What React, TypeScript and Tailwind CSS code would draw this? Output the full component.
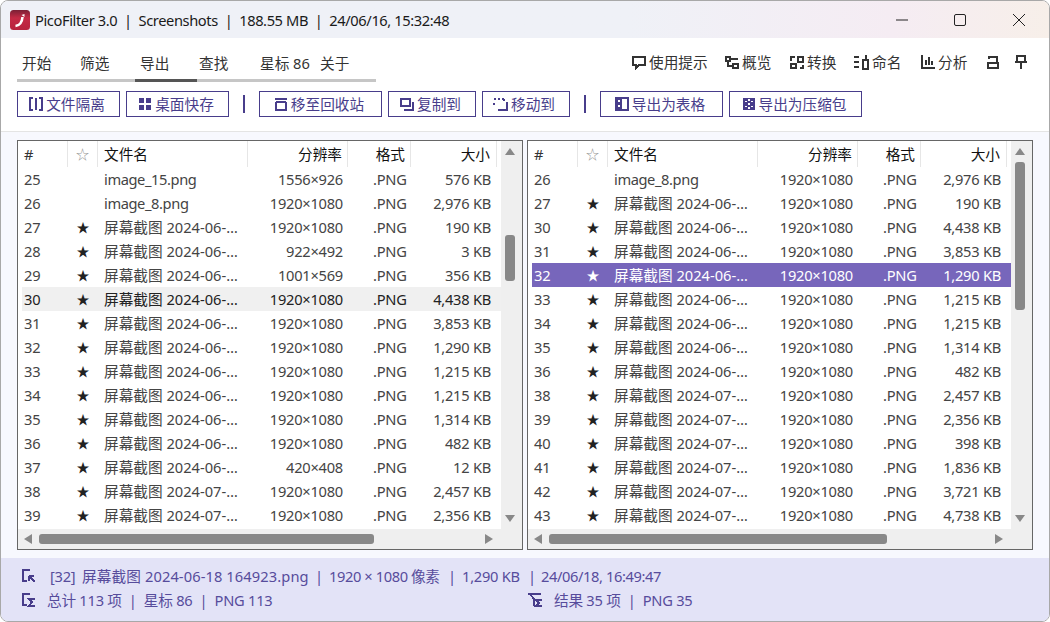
import type { ReactNode } from 'react'

type Row = [string, boolean, string, string, string]

const sh = (d: string) => '屏幕截图 2024-' + d + '-…'

const leftRows: Row[] = [
  ['25', false, 'image_15.png', '1556×926', '576 KB'],
  ['26', false, 'image_8.png', '1920×1080', '2,976 KB'],
  ['27', true, sh('06'), '1920×1080', '190 KB'],
  ['28', true, sh('06'), '922×492', '3 KB'],
  ['29', true, sh('06'), '1001×569', '356 KB'],
  ['30', true, sh('06'), '1920×1080', '4,438 KB'],
  ['31', true, sh('06'), '1920×1080', '3,853 KB'],
  ['32', true, sh('06'), '1920×1080', '1,290 KB'],
  ['33', true, sh('06'), '1920×1080', '1,215 KB'],
  ['34', true, sh('06'), '1920×1080', '1,215 KB'],
  ['35', true, sh('06'), '1920×1080', '1,314 KB'],
  ['36', true, sh('06'), '1920×1080', '482 KB'],
  ['37', true, sh('06'), '420×408', '12 KB'],
  ['38', true, sh('07'), '1920×1080', '2,457 KB'],
  ['39', true, sh('07'), '1920×1080', '2,356 KB'],
]

const rightRows: Row[] = [
  ['26', false, 'image_8.png', '1920×1080', '2,976 KB'],
  ['27', true, sh('06'), '1920×1080', '190 KB'],
  ['30', true, sh('06'), '1920×1080', '4,438 KB'],
  ['31', true, sh('06'), '1920×1080', '3,853 KB'],
  ['32', true, sh('06'), '1920×1080', '1,290 KB'],
  ['33', true, sh('06'), '1920×1080', '1,215 KB'],
  ['34', true, sh('06'), '1920×1080', '1,215 KB'],
  ['35', true, sh('06'), '1920×1080', '1,314 KB'],
  ['36', true, sh('06'), '1920×1080', '482 KB'],
  ['38', true, sh('07'), '1920×1080', '2,457 KB'],
  ['39', true, sh('07'), '1920×1080', '2,356 KB'],
  ['40', true, sh('07'), '1920×1080', '398 KB'],
  ['41', true, sh('07'), '1920×1080', '1,836 KB'],
  ['42', true, sh('07'), '1920×1080', '3,721 KB'],
  ['43', true, sh('07'), '1920×1080', '4,738 KB'],
]

function Ico({ children, className = '' }: { children: ReactNode; className?: string }) {
  return (
    <svg width={16} height={16} viewBox="0 0 16 16" fill="none" stroke="currentColor" strokeWidth="2" shapeRendering="crispEdges" className={'shrink-0 ' + className}>
      {children}
    </svg>
  )
}

function ToolButton({ w, icon, label }: { w: string; icon: ReactNode; label: string }) {
  return (
    <div className={'h-[26px] pr-1 flex items-center justify-center gap-[2px] border border-[#483d8b] text-[#483d8b] ' + w}>
      {icon}
      <span>{label}</span>
    </div>
  )
}

function RightTool({ w, icon, label }: { w: string; icon: ReactNode; label: string }) {
  return (
    <div className={'flex items-center gap-[2px] text-[#333] ' + w}>
      {icon}
      <span>{label}</span>
    </div>
  )
}

function Head({ className, children }: { className: string; children: ReactNode }) {
  return <div className={'h-[26px] border-r border-[#e6e6e6] flex items-center ' + className}>{children}</div>
}

function FileList({ rows, hover, selected, vTop, vHeight, hWidth }: {
  rows: Row[]
  hover?: string
  selected?: string
  vTop: string
  vHeight: string
  hWidth: string
}) {
  return (
    <div className="w-[506px] h-[410px] border border-[#666] bg-white flex flex-col">
      <div className="flex h-[388px]">
        <div className="w-[483px] pl-1 overflow-hidden">
          <div className="grid grid-cols-[46px_30px_150px_100px_63px_86px] h-[26px] text-[#111] tracking-[0px]">
            <Head className="pl-[2px] text-[#333]">#</Head>
            <Head className="justify-center text-[#999] text-[13px]">☆</Head>
            <Head className="pl-[6px]">文件名</Head>
            <Head className="justify-end pr-[5px]">分辨率</Head>
            <Head className="justify-end pr-[5px]">格式</Head>
            <Head className="justify-end pr-[6px]">大小</Head>
          </div>
          {rows.map((r) => (
            <div
              key={r[0]}
              className={
                'grid grid-cols-[46px_30px_150px_100px_63px_86px] h-6 items-center ' +
                (r[0] === selected ? 'bg-[#7766bb] text-white ' : r[0] === hover ? 'bg-[#f0f0f0] text-[#222] ' : 'text-[#444] ')
              }
            >
              <div className="pl-[2px]">{r[0]}</div>
              <div className={'text-center text-[13px] ' + (r[0] === selected ? 'text-white' : 'text-[#222]')}>{r[1] ? '★' : ''}</div>
              <div className={'pl-[6px] whitespace-nowrap overflow-hidden ' + (r[1] ? 'tracking-[0px]' : 'tracking-[-0.4px]')}>{r[2]}</div>
              <div className="text-right pr-[5px]">{r[3]}</div>
              <div className="pl-[25px]">.PNG</div>
              <div className="text-right pr-[6px]">{r[4]}</div>
            </div>
          ))}
        </div>
        <div className="w-[21px] pr-[3px] bg-[#efefef] flex flex-col items-center">
          <svg width="10" height="7" viewBox="0 0 10 7" className="mt-[7px] shrink-0"><path d="M5 0l5 7H0z" fill="#888" /></svg>
          <div className={'w-[10px] rounded-[3px] bg-[#888] shrink-0 ' + vTop + ' ' + vHeight} />
          <div className="flex-1" />
          <svg width="10" height="7" viewBox="0 0 10 7" className="mb-[7px] shrink-0"><path d="M5 7L0 0h10z" fill="#888" /></svg>
        </div>
      </div>
      <div className="h-5 bg-[#efefef] flex items-center">
        <svg width="8" height="10" viewBox="0 0 8 10" className="ml-[6px] shrink-0"><path d="M0 5l8-5v10z" fill="#888" /></svg>
        <div className={'h-[10px] rounded-[3px] bg-[#888] ml-[7px] ' + hWidth} />
        <div className="flex-1" />
        <svg width="8" height="10" viewBox="0 0 8 10" className="mr-[29px] shrink-0"><path d="M8 5L0 0v10z" fill="#888" /></svg>
      </div>
    </div>
  )
}

export default function App() {
  return (
    <div className="w-[1050px] h-[622px] bg-white overflow-hidden [font-family:'Noto_Sans','Noto_Sans_CJK_SC',sans-serif] text-[14.67px] leading-5 tracking-[-0.25px]">
      <div className="w-full h-full flex flex-col border border-[#a8a8a8] rounded-[8px] overflow-hidden">
        {/* title bar */}
        <div className="h-[37px] shrink-0 flex items-center pl-[9px] bg-gradient-to-r from-[#eff1f7] from-60% via-[#f5ecf3] via-85% to-[#f7efe9] text-[#1a1a1a]">
          <svg width="20" height="20" viewBox="0 0 20 20" className="shrink-0">
            <defs>
              <linearGradient id="logo" x1="0" y1="0" x2="0" y2="1">
                <stop offset="0" stopColor="#7a2035" />
                <stop offset="0.4" stopColor="#c42a45" />
                <stop offset="1" stopColor="#b8243e" />
              </linearGradient>
            </defs>
            <rect width="20" height="20" rx="3.5" fill="url(#logo)" />
            <path d="M5.5 16c4-.5 6.500-3 7-9" stroke="#fff" strokeWidth="2.600" fill="none" />
            <path d="M11.500 5l3-1v3z" fill="#fff" />
          </svg>
          <span className="ml-[5px] whitespace-pre tracking-[-0.4px]">PicoFilter 3.0  |  Screenshots  |  188.55 MB  |  24/06/16, 15:32:48</span>
          <div className="flex-1" />
          <svg width="12" height="2" className="mr-[46px]"><path d="M0 1h12" stroke="#222" /></svg>
          <svg width="12" height="12" className="mr-[47px]"><rect x=".5" y=".5" width="11" height="11" rx="1.500" stroke="#222" fill="none" /></svg>
          <svg width="12" height="12" className="mr-[24px]"><path d="M0 0l12 12M12 0L0 12" stroke="#222" /></svg>
        </div>

        {/* toolbar */}
        <div className="h-[94px] shrink-0 bg-white pl-4 flex flex-col border-b border-[#e4e4e4]">
          <div className="flex justify-between pt-[14px] h-[53px]">
            <div className="w-[359px]">
              <div className="flex h-[27px] pt-px text-[#333] tracking-[0px]">
                <span className="w-[63px] pl-[5px]">开始</span>
                <span className="w-[60px]">筛选</span>
                <span className="w-[59px]">导出</span>
                <span className="w-[61px]">查找</span>
                <span className="w-[60px] whitespace-nowrap">星标 86</span>
                <span>关于</span>
              </div>
              <div className="h-[3px] bg-[#c6c6c6] flex">
                <div className="w-[118px]" />
                <div className="w-[62px] bg-[#555]" />
              </div>
            </div>
            <div className="flex tracking-[0px] h-5 mr-[19px]">
              <RightTool w="w-[93px]" label="使用提示" icon={
                <Ico className="text-[#333]"><path d="M2 3h12v8H8l-3 3v-3H2z" /></Ico>
              } />
              <RightTool w="w-[65px]" label="概览" icon={
                <Ico className="text-[#333]"><path d="M2 3h4v4H2zM6 5h8M4 7v5h5M9 10h5v4H9z" /></Ico>
              } />
              <RightTool w="w-[65px]" label="转换" icon={
                <Ico className="text-[#333]"><path d="M9 3h5v5H9zM2 10h5v4H2zM2 7V3h4M14 11v3h-3" /></Ico>
              } />
              <RightTool w="w-[66px]" label="命名" icon={
                <Ico className="text-[#333]"><path d="M0 3h5M0 8h5M0 13h5M9 6h5v9H9zM11.500 1v5" /></Ico>
              } />
              <RightTool w="w-[66px]" label="分析" icon={
                <Ico className="text-[#333]"><path d="M2 1v13h13M6 6v5M9 3v8M12 7v4" /></Ico>
              } />
              <div className="w-7 flex items-center"><Ico className="text-[#333]"><path d="M2 9h10v5H2zM3 5V3h8v6" /></Ico></div>
              <div className="w-4 flex items-center"><Ico className="text-[#333]"><path d="M3 2h8v6H3zM1 8h12M7 8v7" /></Ico></div>
            </div>
          </div>
          <div className="flex items-center tracking-[0px]">
            <ToolButton w="w-[103px] mr-[6px]" label="文件隔离" icon={
              <Ico><path d="M5 2H2v12h3M11 2h3v12h-3M8 2v12" /></Ico>
            } />
            <ToolButton w="w-[103px]" label="桌面快存" icon={
              <Ico><path d="M2 2h5v5H2zM9 2h5v5H9zM2 9h5v5H2zM9 9h5v5H9z" fill="currentColor" stroke="none" /></Ico>
            } />
            <div className="w-[2px] h-[18px] bg-[#483d8b] mx-[14px]" />
            <ToolButton w="w-[123px] mr-[6px]" label="移至回收站" icon={
              <Ico><path d="M2 3h12M3 6h10M3 6v8h10V6" /></Ico>
            } />
            <ToolButton w="w-[88px] mr-[6px]" label="复制到" icon={
              <Ico><path d="M2 3h9v7H2zM14 6v8H5" /></Ico>
            } />
            <ToolButton w="w-[88px]" label="移动到" icon={
              <Ico><path d="M1 3h10M1 7v4M11 3v4" strokeDasharray="2 2" /><path d="M14 6v8H5" /></Ico>
            } />
            <div className="w-[2px] h-[18px] bg-[#483d8b] mx-[14px]" />
            <ToolButton w="w-[123px] mr-[6px]" label="导出为表格" icon={
              <Ico><path d="M2 2h12v12H2zM7 2v12" /><path d="M2 2h5v12H2z" fill="currentColor" stroke="none" /><path d="M4 5h2M4 10h2" stroke="#fff" /></Ico>
            } />
            <ToolButton w="w-[133px]" label="导出为压缩包" icon={
              <Ico><path d="M2 2h12v12H2z" fill="currentColor" stroke="none" /><path d="M8 3v2M8 7v2M8 11v2M5 5v1M11 5v1M5 10v1M11 10v1" stroke="#fff" /></Ico>
            } />
          </div>
        </div>

        {/* lists */}
        <div className="h-[426px] shrink-0 bg-[#f7f8fe] pl-4 pt-2 flex gap-[4px]">
          <FileList rows={leftRows} hover="30" vTop="mt-[80px]" vHeight="h-[46px]" hWidth="w-[335px]" />
          <FileList rows={rightRows} selected="32" vTop="mt-[7px]" vHeight="h-[148px]" hWidth="w-[338px]" />
        </div>

        {/* status */}
        <div className="flex-1 bg-[#e3e3f7] text-[#574c9c] pl-5 pt-[6px]">
          <div className="flex items-center h-6 whitespace-pre">
            <Ico className="text-[#483d8b]"><path d="M9 2H2v11h4M8 8l6 6M8 8h5M8 8v5" /></Ico>
            <span className="ml-[13px] w-[32px]">[32]</span>
            <span className="tracking-[0.1px] w-[233px]">屏幕截图 2024-06-18 164923.png</span>
            <span className="w-[14px]">|</span>
            <span className="tracking-[-0.4px] w-[119px]">1920 × 1080 像素</span>
            <span className="w-[14px]">|</span>
            <span className="w-[66px]">1,290 KB</span>
            <span className="w-[13px]">|</span>
            <span className="tracking-[-0.4px]">24/06/18, 16:49:47</span>
          </div>
          <div className="flex items-center h-6 whitespace-pre">
            <Ico className="text-[#483d8b]"><path d="M9 2H2v11h4M14 7H8l3 3-3 4h6" /></Ico>
            <span className="ml-[10px] w-[480px]">总计 113 项  |  星标 86  |  PNG 113</span>
            <Ico className="text-[#483d8b]"><path d="M1 2h13M3 2l4 5v7M15 8H9l3 3-3 3h6" /></Ico>
            <span className="ml-[11px]">结果 35 项  |  PNG 35</span>
          </div>
        </div>
      </div>
    </div>
  )
}
